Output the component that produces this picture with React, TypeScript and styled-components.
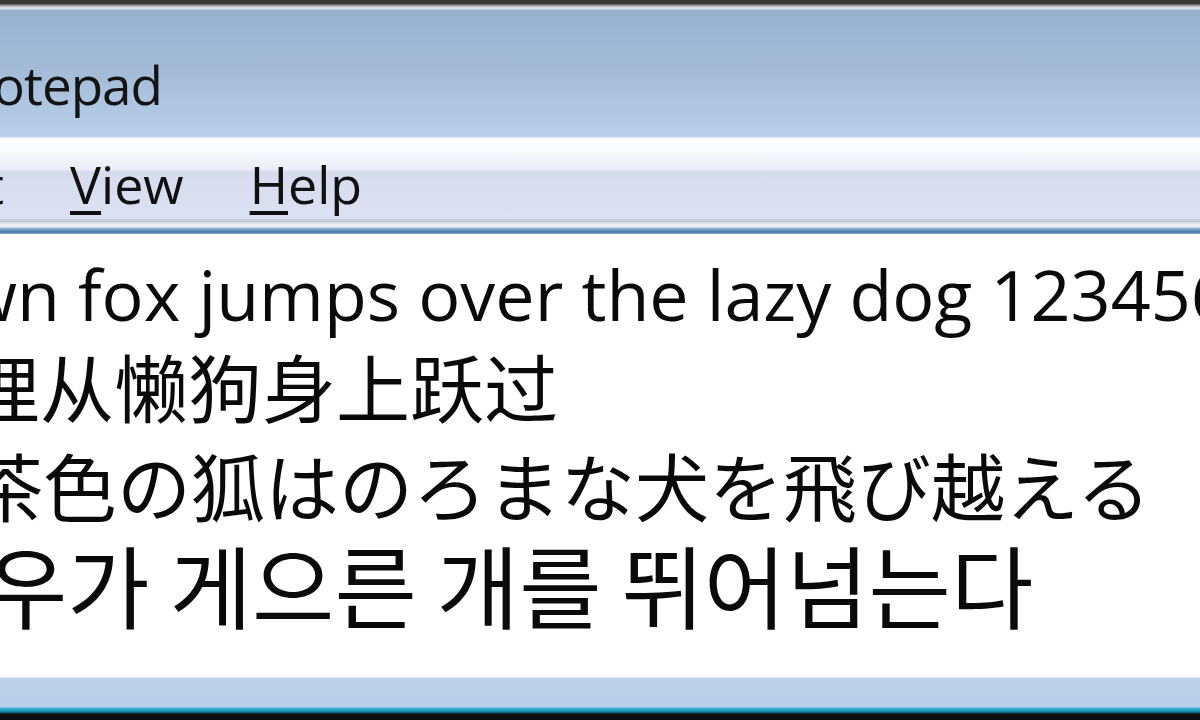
import { useLayoutEffect, useRef, useState, type ReactNode } from 'react';
import styled, { createGlobalStyle } from 'styled-components';

const GlobalStyle = createGlobalStyle`
  html, body {
    margin: 0;
    padding: 0;
    background: #ffffff;
    overflow: hidden;
  }
`;

const UI_FONT = `"Open Sans", "Noto Sans", sans-serif`;

const Window = styled.div`
  width: 1200px;
  height: 720px;
  display: flex;
  flex-direction: column;
  overflow: hidden;
  background: #ffffff;
`;

const FrameTop = styled.div`
  height: 10px;
  flex: none;
  background: linear-gradient(
    to bottom,
    #363636 0px,
    #3a3a3a 4px,
    #8d8d8d 5px,
    #c9ced4 7px,
    #e4ebf2 8px,
    #b3c6dc 10px
  );
`;

const TitleBar = styled.div`
  height: 127px;
  flex: none;
  overflow: hidden;
  background: linear-gradient(to bottom, #97b1cf 0%, #a4bcd8 50%, #b8d0ea 100%);
`;

const ShiftRow = styled.div`
  position: relative;
  white-space: pre;
  width: max-content;
`;

const TitleText = styled(ShiftRow)`
  padding-top: 38px;
  font-family: ${UI_FONT};
  font-size: 53px;
  line-height: 74px;
  letter-spacing: -1px;
  color: #141414;
`;

const MenuBar = styled.div`
  height: 82px;
  flex: none;
  overflow: hidden;
  background: linear-gradient(
    to bottom,
    #dbe6f3 0px,
    #fdfdfe 2px,
    #fbfcfd 12px,
    #eceef8 31px,
    #e6e9f5 33px,
    #d6dbee 35px,
    #dce2f3 82px
  );
`;

const MenuRow = styled(ShiftRow)`
  display: flex;
  padding-top: 12px;
`;

const MenuItem = styled.span`
  padding: 0 33px;
  font-family: ${UI_FONT};
  font-size: 52px;
  line-height: 70px;
  color: #111111;
`;

const Mnemonic = styled.span`
  text-decoration: underline;
  text-decoration-thickness: 4px;
  text-underline-offset: 7px;
`;

const MenuEdge = styled.div`
  height: 15px;
  flex: none;
  background: linear-gradient(
    to bottom,
    #c4c9d6 0px,
    #c9cedb 3px,
    #e9ecf3 5px,
    #eef1f6 8px,
    #9ab6d4 9px,
    #6f98c1 11px,
    #4778a8 13px,
    #8fb0d2 15px
  );
`;

const EditArea = styled.div`
  flex: 1;
  overflow: hidden;
  padding-top: 20px;
  background: #ffffff;
`;

const TextLine = styled(ShiftRow)<{ $size: number; $lh: number; $font: string }>`
  font-family: ${(p) => p.$font};
  font-size: ${(p) => p.$size}px;
  line-height: ${(p) => p.$lh}px;
  height: ${(p) => p.$lh}px;
  color: #0a0a0a;
`;

const StatusEdge = styled.div`
  height: 43px;
  flex: none;
  background: linear-gradient(
    to bottom,
    #e1ebf5 0px,
    #bcd1e9 2px,
    #b8cde7 30px,
    #4bb3d0 31px,
    #1fa6c6 33px,
    #137a93 35px,
    #0e1418 37px,
    #0b0b0b 43px
  );
`;

// keeps one part of a clipped row at a fixed x, like a scrolled view
const Shifted = ({
  as: Row,
  target,
  before,
  anchor,
  after,
  rowProps,
}: {
  as: typeof ShiftRow | typeof TextLine | typeof TitleText | typeof MenuRow;
  target: number;
  before: ReactNode;
  anchor: ReactNode;
  after?: ReactNode;
  rowProps?: Record<string, unknown>;
}) => {
  const rowRef = useRef<HTMLDivElement>(null);
  const anchorRef = useRef<HTMLSpanElement>(null);
  const [shift, setShift] = useState(0);

  useLayoutEffect(() => {
    const measure = () => {
      if (!rowRef.current || !anchorRef.current) return;
      const row = rowRef.current.getBoundingClientRect();
      const a = anchorRef.current.getBoundingClientRect();
      setShift(target - (a.left - row.left));
    };
    measure();
    document.fonts?.ready.then(measure);
  }, [target]);

  const AnyRow = Row as any;
  return (
    <AnyRow ref={rowRef} style={{ marginLeft: shift }} {...rowProps}>
      {before}
      <span ref={anchorRef}>{anchor}</span>
      {after}
    </AnyRow>
  );
};

const LATIN = `"Open Sans", "Noto Sans CJK SC", sans-serif`;

const lines = [
  {
    hidden: 'The quick brown ',
    shown: 'fox jumps over the lazy dog 1234567890',
    target: 78,
    size: 70,
    lh: 81,
    font: LATIN,
  },
  {
    hidden: '敏捷的棕色狐狸',
    shown: '从懒狗身上跃过',
    target: 40,
    size: 74,
    lh: 99,
    font: `"Noto Sans CJK SC", "Open Sans", sans-serif`,
  },
  {
    hidden: '素早い茶',
    shown: '色の狐はのろまな犬を飛び越える',
    target: 43,
    size: 74,
    lh: 99,
    font: `"Noto Sans CJK JP", "Open Sans", sans-serif`,
  },
  {
    hidden: '빠른 갈색 여',
    shown: '우가 게으른 개를 뛰어넘는다',
    target: -15,
    size: 89.5,
    lh: 100,
    font: `"Noto Sans CJK KR", "Open Sans", sans-serif`,
  },
];

export default function App() {
  return (
    <Window>
      <GlobalStyle />
      <FrameTop />
      <TitleBar>
        <Shifted as={TitleText} target={24} before="Untitled - No" anchor="tepad" />
      </TitleBar>
      <MenuBar>
        <Shifted
          as={MenuRow}
          target={37}
          before={
            <>
              <MenuItem>
                <Mnemonic>F</Mnemonic>ile
              </MenuItem>
              <MenuItem>
                <Mnemonic>E</Mnemonic>dit
              </MenuItem>
              <MenuItem>
                F<Mnemonic>o</Mnemonic>rmat
              </MenuItem>
            </>
          }
          anchor={
            <MenuItem>
              <Mnemonic>V</Mnemonic>iew
            </MenuItem>
          }
          after={
            <MenuItem>
              <Mnemonic>H</Mnemonic>elp
            </MenuItem>
          }
        />
      </MenuBar>
      <MenuEdge />
      <EditArea>
        {lines.map((l) => (
          <Shifted
            key={l.shown}
            as={TextLine}
            target={l.target}
            before={l.hidden}
            anchor={l.shown}
            rowProps={{ $size: l.size, $lh: l.lh, $font: l.font }}
          />
        ))}
      </EditArea>
      <StatusEdge />
    </Window>
  );
}
